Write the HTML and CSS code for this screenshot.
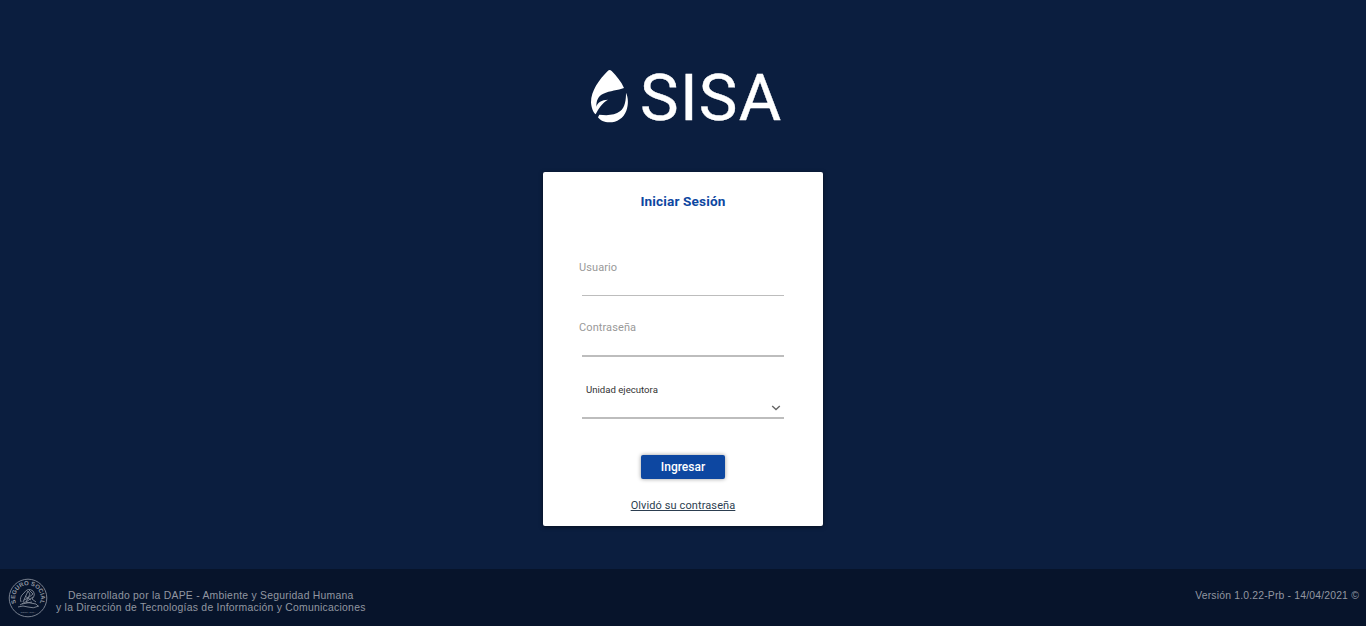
FILE: index.html
```html
<!DOCTYPE html>
<html lang="es">
<head>
<meta charset="utf-8">
<title>SISA</title>
<link rel="stylesheet" href="styles.css">
</head>
<body>
<main class="main">
  <svg class="logo" viewBox="0 0 200 64" role="img" aria-label="SISA">
    <g transform="scale(.33333)" fill="#fff">
      <path d="M66 20Q71 16 77 21C91 35 106 53 114 72C96 79 72 80 52 89C35 97 31 111 31 128C34 116 47 107 66 107C49 116 38 133 29 151C22 146 16 132 15 115C15 80 39 47 66 20Z"/>
      <path d="M120 86C127 101 128 122 121 140C113 162 93 175 70 175C55 175 42 169 36 160L40 152C64 155 87 154 102 142C118 129 120 107 120 86Z"/>
    </g>
    <text class="logo-text" x="54" y="56">SISA</text>
  </svg>
  <form class="card">
    <h1 class="title">Iniciar Sesión</h1>
    <div class="field user"><label class="label">Usuario</label></div>
    <div class="field password"><label class="label">Contraseña</label></div>
    <div class="field unit">
      <label class="unit-label">Unidad ejecutora</label>
      <svg class="chevron" viewBox="0 0 10 6"><path d="M1.2 1L5 4.5L8.8 1"/></svg>
    </div>
    <button class="submit" type="button">Ingresar</button>
    <a class="forgot">Olvidó su contraseña</a>
  </form>
</main>
<footer class="footer">
  <svg class="seal" viewBox="0 0 40 40">
    <defs><path id="arc" d="M8.2 25A12.8 12.8 0 1 1 31.8 25"/></defs>
    <circle cx="20" cy="20" r="18.8"/>
    <text class="seal-text"><textPath href="#arc" textLength="50">SEGURO SOCIAL</textPath></text>
    <path d="M10 29Q15 27 20 29T31 28M12 27L17 24L28 26L30 28M13 24Q11 19 16 15Q20 9 25 13Q28 17 24 21L28 24M15 24L20 13L22 16L18 24L25 19M17 18L23 22M21 12L25 16L20 20L16 22M14 26L24 24"/>
    <text class="seal-place" x="20" y="34.5">COSTA RICA</text>
  </svg>
  <p class="credits">Desarrollado por la DAPE - Ambiente y Seguridad Humana<br>y la Dirección de Tecnologías de Información y Comunicaciones</p>
  <p class="version">Versión 1.0.22-Prb - 14/04/2021 ©</p>
</footer>
</body>
</html>
```
FILE: styles.css
```css
* { box-sizing: border-box; }
body {
  margin: 0;
  height: 626px;
  display: flex;
  flex-direction: column;
  overflow: hidden;
  background: #0b1e3f;
  font-family: Roboto, sans-serif;
}
.main {
  height: 569px;
  padding-top: 64px;
  display: flex;
  flex-direction: column;
  align-items: center;
}
.logo { width: 200px; height: 64px; margin-left: 6px; flex: none; overflow: visible; }
.logo-text { font: 400 65px Roboto, sans-serif; letter-spacing: 1.3px; fill: #fff; stroke: #fff; stroke-width: .4; }
.card {
  width: 280px;
  height: 354px;
  margin-top: 44px;
  padding: 21px 39px 0;
  display: flex;
  flex-direction: column;
  align-items: center;
  flex: none;
  background: #fff;
  border-radius: 2px;
  box-shadow: 0 1px 4px rgba(0, 0, 0, .5);
}
.title { margin: 0; font-size: 13.6px; line-height: 16px; letter-spacing: .15px; font-weight: 700; color: #0d47a1; }
.field { width: 202px; border-bottom: 2px solid #bdbdbd; flex: none; }
.label { display: block; margin-left: -3px; font-size: 11px; line-height: 16px; letter-spacing: .1px; color: #999; }
.user { height: 36px; margin-top: 51px; border-bottom-width: 1px; }
.password { height: 37px; margin-top: 24px; }
.unit { height: 36px; margin-top: 26px; }
.unit-label { display: block; margin-left: 4px; font-size: 9.6px; line-height: 14px; color: #333; }
.chevron { display: block; width: 10px; height: 6px; margin: 8px 3px 0 auto; fill: none; stroke: #666; stroke-width: 1.4; }
.submit {
  width: 84px;
  height: 24px;
  margin-top: 36px;
  padding: 0;
  border: 0;
  border-radius: 2px;
  background: #0d47a1;
  box-shadow: 0 0 4px rgba(0, 0, 0, .4);
  color: #fff;
  font: 500 12px Roboto, sans-serif;
}
.forgot { margin-top: 19px; font-size: 11px; line-height: 16px; letter-spacing: .1px; color: #2c3e50; text-decoration: underline; }
.footer {
  height: 57px;
  display: flex;
  background: #07142b;
  color: #9297a1;
  font: 10.4px/12px "Liberation Sans", Arial, sans-serif;
  letter-spacing: .25px;
}
.seal { width: 40px; height: 40px; margin: 9px 0 0 8px; fill: none; stroke: #838b98; stroke-width: .9; }
.seal-text, .seal-place { font-family: "Liberation Sans", sans-serif; fill: #8f96a2; stroke: none; letter-spacing: 0; }
.seal-text { font-size: 6px; font-weight: 700; }
.seal-place { font-size: 2.5px; text-anchor: middle; }
.credits { margin: 21px 0 0 8px; text-align: center; white-space: nowrap; }
.version { margin: 21px 7px 0 auto; white-space: nowrap; letter-spacing: .18px; }
```
